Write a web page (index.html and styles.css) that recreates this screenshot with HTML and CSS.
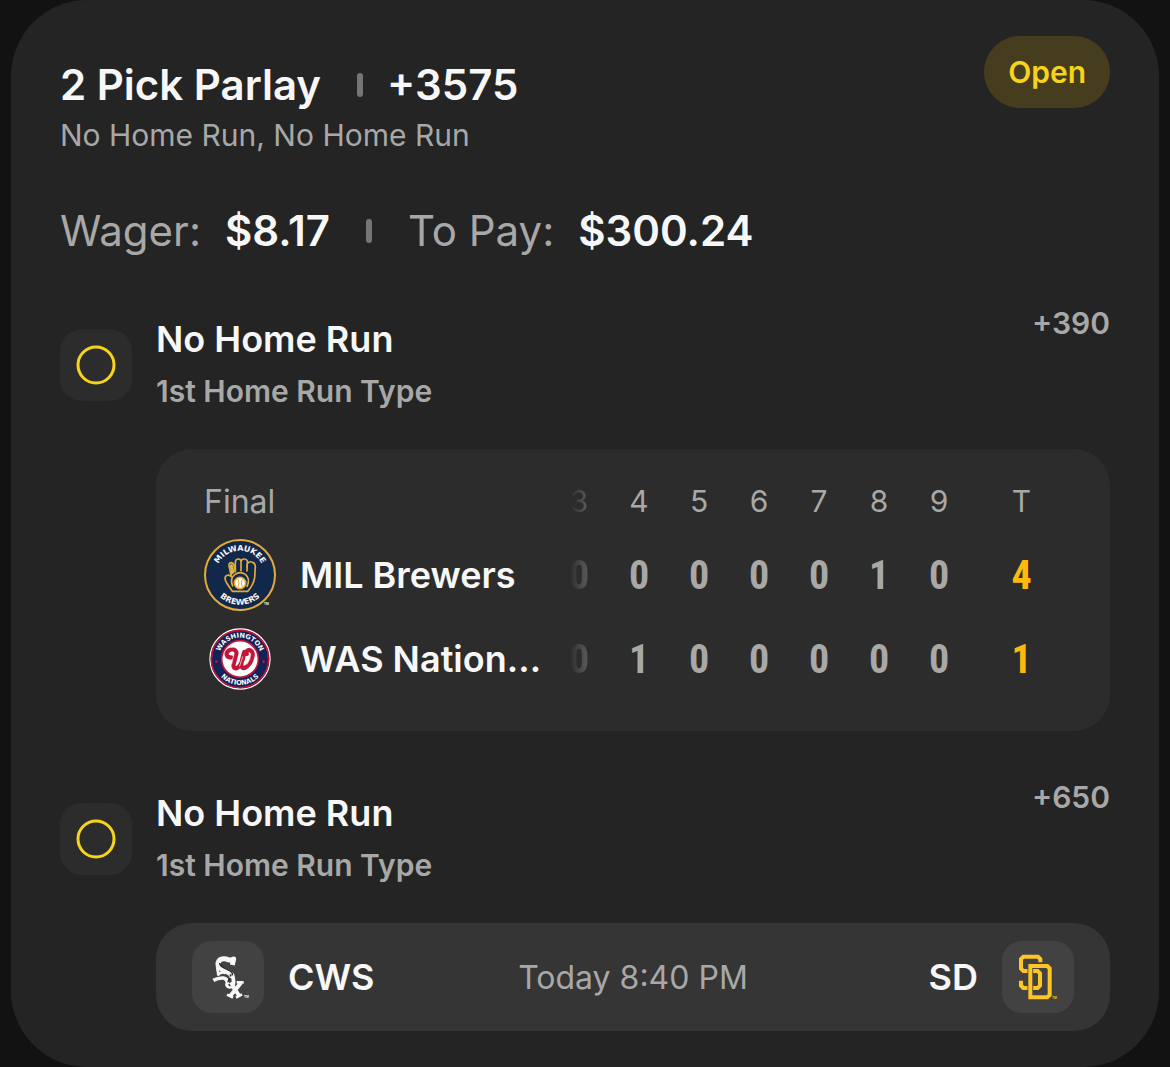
FILE: index.html
```html
<!DOCTYPE html>
<html lang="en">
<head>
  <meta charset="UTF-8">
  <meta name="viewport" content="width=device-width, initial-scale=1.0">
  <title>2 Pick Parlay</title>
  <link rel="stylesheet" href="styles.css">
</head>
<body>

<main class="bet-card">
  <header class="bet-header">
    <div class="bet-title">
      <h1 class="title-row">
        <span>2 Pick Parlay</span>
        <span class="divider"></span>
        <span class="total-odds">+3575</span>
      </h1>
      <p class="picks">No Home Run, No Home Run</p>
    </div>
    <span class="status">Open</span>
  </header>

  <div class="stakes">
    <span class="label">Wager:</span>
    <strong class="amount">$8.17</strong>
    <span class="divider"></span>
    <span class="label to-pay">To Pay:</span>
    <strong class="amount">$300.24</strong>
  </div>

  <section class="leg">
    <div class="leg-icon">
      <svg width="40" height="40" viewBox="0 0 40 40"><circle cx="20" cy="20" r="18" fill="none" stroke="#f6d41c" stroke-width="3"/></svg>
    </div>
    <div class="leg-name">
      <h2>No Home Run</h2>
      <p>1st Home Run Type</p>
    </div>
    <span class="leg-odds">+390</span>

    <div class="scoreboard">
      <table>
        <thead>
          <tr>
            <th class="team-col">Final</th>
            <th><span class="fade">3</span></th>
            <th>4</th>
            <th>5</th>
            <th>6</th>
            <th>7</th>
            <th>8</th>
            <th>9</th>
            <th class="total">T</th>
          </tr>
        </thead>
        <tbody>
          <tr>
            <td class="team-col">
              <div class="team">
                <svg class="logo" viewBox="24 21 216 216">
                  <circle cx="132" cy="129" r="105" fill="#12284b" stroke="#e3ac3a" stroke-width="6"/>
                  <path id="mil-top" d="M59 129 A73 73 0 0 1 205 129" fill="none"/>
                  <path id="mil-bottom" d="M43 129 A89 89 0 0 0 221 129" fill="none"/>
                  <text class="ring-text"><textPath href="#mil-top" startOffset="50%">MILWAUKEE</textPath></text>
                  <text class="ring-text"><textPath href="#mil-bottom" startOffset="50%">BREWERS</textPath></text>
                  <g fill="none" stroke="#e3ac3a" stroke-width="5" stroke-linecap="round" stroke-linejoin="round">
                    <path d="M109 178 L94 156 Q82 139 91 131 Q98 126 106 134 L99 101 Q98 92 106 92 Q112 93 114 101 L118 119 V90 Q119 81 127 81 Q135 81 135 90 V116 V89 Q137 80 145 81 Q155 82 154 91 L153 117 V97 Q158 87 167 90 Q177 92 178 103 L176 137 Q172 160 155 178 Z"/>
                    <path d="M110 162 Q100 139 117 127 Q132 117 148 127 Q164 140 153 163"/>
                  </g>
                  <path d="M101 98 L109 96 L116 121 L106 130 Z" fill="#e3b640"/>
                  <circle cx="132" cy="153" r="17" fill="#fff" stroke="#e3ac3a" stroke-width="5"/>
                  <path d="M126 141 Q132 153 126 165 M139 141 Q133 153 139 165" fill="none" stroke="#e3ac3a" stroke-width="3"/>
                  <text class="tm" x="204" y="220">TM</text>
                </svg>
                <span>MIL Brewers</span>
              </div>
            </td>
            <td><span class="fade">0</span></td>
            <td>0</td>
            <td>0</td>
            <td>0</td>
            <td>0</td>
            <td>1</td>
            <td>0</td>
            <td class="total">4</td>
          </tr>
          <tr>
            <td class="team-col">
              <div class="team">
                <svg class="logo" viewBox="12 3 216 216">
                  <circle cx="120" cy="111" r="90" fill="#14225a" stroke="#fff" stroke-width="4"/>
                  <circle cx="120" cy="111" r="86" fill="none" stroke="#c21538" stroke-width="5"/>
                  <circle cx="120" cy="111" r="55" fill="#fff" stroke="#c21538" stroke-width="5"/>
                  <path id="was-top" d="M56 111 A64 64 0 0 1 184 111" fill="none"/>
                  <path id="was-bottom" d="M42 111 A78 78 0 0 0 198 111" fill="none"/>
                  <text class="ring-text small"><textPath href="#was-top" startOffset="50%">WASHINGTON</textPath></text>
                  <text class="ring-text small"><textPath href="#was-bottom" startOffset="50%">NATIONALS</textPath></text>
                  <g fill="#c21538">
                    <circle cx="49" cy="119" r="4"/>
                    <circle cx="191" cy="119" r="4"/>
                  </g>
                  <g fill="none" stroke-linecap="round" stroke-linejoin="round">
                    <path d="M94 106 Q79 107 80 94 Q84 82 101 83 Q112 86 108 99 L101 126 Q99 140 109 139 Q121 134 128 112 L133 90 M131 96 L124 124 Q123 139 133 138 Q151 130 157 105 Q161 87 148 84 Q137 85 140 96" stroke="#c21538" stroke-width="13"/>
                    <path d="M92 99 Q84 97 91 91 Q102 86 102 96 L95 126 M128 104 L119 132 M152 95 Q153 112 141 127" stroke="#fff" stroke-width="2"/>
                  </g>
                </svg>
                <span>WAS Nation…</span>
              </div>
            </td>
            <td><span class="fade">0</span></td>
            <td>1</td>
            <td>0</td>
            <td>0</td>
            <td>0</td>
            <td>0</td>
            <td>0</td>
            <td class="total">1</td>
          </tr>
        </tbody>
      </table>
    </div>
  </section>

  <section class="leg">
    <div class="leg-icon">
      <svg width="40" height="40" viewBox="0 0 40 40"><circle cx="20" cy="20" r="18" fill="none" stroke="#f6d41c" stroke-width="3"/></svg>
    </div>
    <div class="leg-name">
      <h2>No Home Run</h2>
      <p>1st Home Run Type</p>
    </div>
    <span class="leg-odds">+650</span>

    <div class="matchup">
      <div class="side">
        <span class="tile">
          <svg class="logo" viewBox="18 18 216 216">
            <g fill="none" stroke="#f7f7f7" stroke-linejoin="round">
              <path d="M139 90 L143 72 Q132 78 121 72 Q100 68 96 84 Q94 96 108 103 L130 114 Q141 120 138 131" stroke-width="15"/>
              <path d="M93 94 L97 119 Q106 108 118 114" stroke-width="8"/>
              <path d="M82 136 Q96 128 112 129 Q124 131 124 143 Q120 155 131 156 Q143 155 143 140 L141 126" stroke-width="11"/>
              <path d="M133 143 L160 183 M165 143 L132 184" stroke-width="12"/>
              <path d="M152 142 H173 M123 179 L141 188 M150 188 L168 178" stroke-width="8"/>
            </g>
            <path d="M101 84 Q101 92 111 97 L132 108 Q141 113 139 121 M134 130 Q126 134 126 142 M132 118 l3 6 M128 148 l5 5" fill="none" stroke="#262626" stroke-width="4"/>
            <text class="tm" x="174" y="190">TM</text>
          </svg>
        </span>
        <span>CWS</span>
      </div>
      <time class="start">Today 8:40 PM</time>
      <div class="side">
        <span>SD</span>
        <span class="tile">
          <svg class="logo" viewBox="18 18 216 216">
            <g fill="none">
              <path d="M133 82 V72 L126 65 H82 L75 72 V101 L82 108 H125 L132 115 V152 L125 159 H82 L75 152 V137" stroke="#ffc425" stroke-width="12"/>
              <path d="M103 99 V187" stroke="#424242" stroke-width="17"/>
              <path d="M97 93 H154 L161 100 V180 L154 187 H97 M103 93 V187" stroke="#ffc425" stroke-width="12"/>
            </g>
            <text class="tm gold" x="168" y="191">TM</text>
          </svg>
        </span>
      </div>
    </div>
  </section>
</main>

</body>
</html>
```

FILE: styles.css
```css
* {
  box-sizing: border-box;
}
body {
  margin: 0;
  padding: 0 11px;
  background: #121212;
  color: #f7f7f7;
  font-family: Inter, 'Liberation Sans', sans-serif;
}
h1, h2, p {
  margin: 0;
}
.bet-card {
  background: #242424;
  border-radius: 76px;
  padding: 36px 49px;
}
.bet-header {
  display: flex;
  justify-content: space-between;
  align-items: flex-start;
}
.bet-title {
  padding-top: 23px;
}
.title-row, .stakes {
  display: flex;
  align-items: center;
  font-size: 42px;
  line-height: 52px;
  font-weight: 600;
}
.divider {
  width: 6px;
  height: 24px;
  border-radius: 3px;
  background: #757575;
  margin: 0 24px 0 36px;
}
.picks {
  font-size: 30px;
  line-height: 48px;
  color: #a8a8a8;
}
.status {
  padding: 0 24px;
  border-radius: 36px;
  background: #463d1f;
  color: #f6d41c;
  font-size: 30px;
  line-height: 72px;
  font-weight: 600;
}
.stakes {
  margin-top: 46px;
}
.label {
  color: #a8a8a8;
  font-weight: 400;
}
.to-pay {
  margin-left: 12px;
}
.amount {
  font-weight: 600;
  margin-left: 24px;
}

/* legs */
.leg {
  display: grid;
  grid-template-columns: 72px 1fr auto;
  column-gap: 24px;
  margin-top: 48px;
}
.leg-icon {
  width: 72px;
  height: 72px;
  margin-top: 24px;
  border-radius: 22px;
  background: #2c2c2c;
  display: flex;
  align-items: center;
  justify-content: center;
}
.leg-name {
  padding-top: 8px;
}
.leg-name h2 {
  font-size: 36px;
  line-height: 52px;
  font-weight: 600;
}
.leg-name p {
  font-size: 30px;
  line-height: 52px;
  font-weight: 600;
  color: #a8a8a8;
}
.leg-odds {
  font-size: 30px;
  line-height: 36px;
  font-weight: 600;
  color: #a8a8a8;
}
.scoreboard, .matchup {
  grid-column: 2 / 4;
  margin-top: 32px;
  border-radius: 36px;
}

/* line score */
.scoreboard {
  background: #2c2c2c;
  padding: 20px 48px 30px;
}
.scoreboard table {
  width: 100%;
  table-layout: fixed;
  border-collapse: collapse;
}
.scoreboard th, .scoreboard td {
  width: 60px;
  padding: 0;
  text-align: center;
  color: #a8a8a8;
}
.scoreboard th {
  height: 64px;
  font-size: 30px;
  font-weight: 400;
}
.scoreboard td {
  height: 84px;
  font-family: 'Roboto Condensed', 'Liberation Sans Narrow', Roboto, sans-serif;
  font-size: 40px;
  font-weight: 700;
}
.scoreboard .team-col {
  width: auto;
  text-align: left;
}
.scoreboard th.team-col {
  font-size: 32px;
}
.scoreboard .total {
  width: 93px;
  padding-left: 12px;
}
.scoreboard td.total {
  color: #ffb80c;
}
.fade {
  -webkit-mask-image: linear-gradient(90deg, transparent, rgba(0, 0, 0, 0.4));
  mask-image: linear-gradient(90deg, transparent, rgba(0, 0, 0, 0.4));
}
.team {
  display: flex;
  align-items: center;
  gap: 24px;
  color: #f7f7f7;
  font-family: Inter, 'Liberation Sans', sans-serif;
  font-size: 36px;
  font-weight: 600;
  white-space: nowrap;
}
.logo {
  display: block;
  flex: none;
  width: 72px;
  height: 72px;
}
.ring-text {
  font-family: 'DejaVu Sans', sans-serif;
  font-size: 24px;
  font-weight: 700;
  fill: #f7f7f7;
  text-anchor: middle;
}
.ring-text.small {
  font-size: 20px;
}
.tm {
  font-family: 'Liberation Sans', sans-serif;
  font-size: 10px;
  fill: #f7f7f7;
}
.gold {
  fill: #ffc425;
}

/* upcoming game */
.matchup {
  display: grid;
  grid-template-columns: 1fr auto 1fr;
  align-items: center;
  padding: 18px 36px;
  background: #353535;
}
.side {
  display: flex;
  align-items: center;
  gap: 24px;
  font-size: 36px;
  font-weight: 600;
}
.side:last-child {
  justify-content: flex-end;
}
.tile {
  border-radius: 20px;
  background: #424242;
}
.start {
  font-size: 32px;
  color: #a8a8a8;
}
```
